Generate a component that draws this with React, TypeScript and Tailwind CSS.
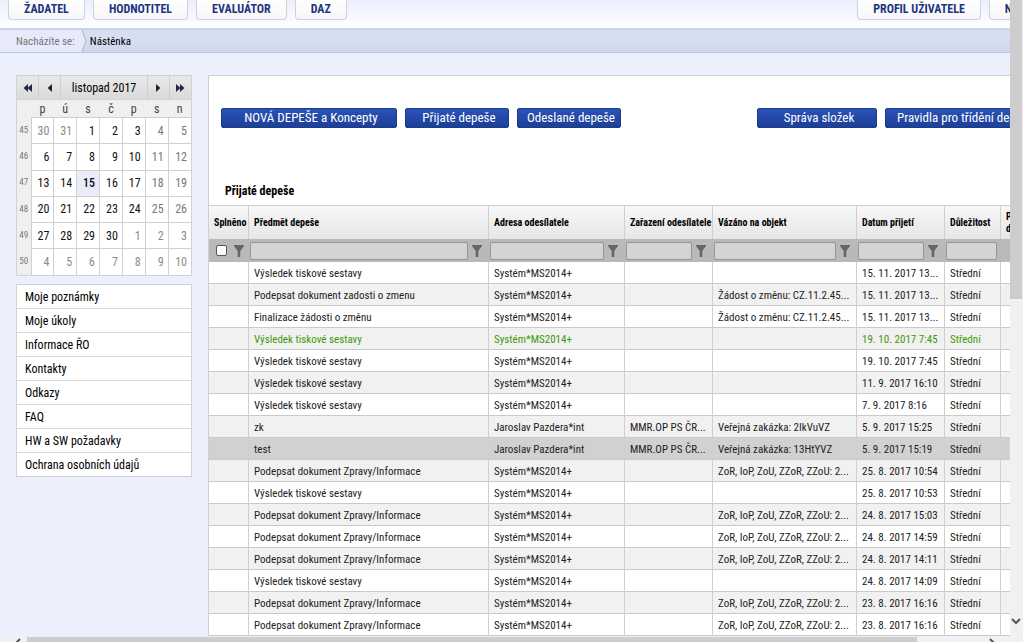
import React from 'react';

interface Message {
  subject: string;
  sender: string;
  group?: string;
  object?: string;
  received: string;
  state?: 'unread' | 'selected';
}

const SYSTEM = 'Systém*MS2014+';
const REPORT = 'Výsledek tiskové sestavy';
const SIGN = 'Podepsat dokument Zpravy/Informace';
const ZOR = 'ZoR, IoP, ZoU, ZZoR, ZZoU: 2...';
const CHANGE = 'Žádost o změnu: CZ.11.2.45...';
const GROUP = 'MMR.OP PS ČR...';

const messages: Message[] = [
  { subject: REPORT, sender: SYSTEM, received: '15. 11. 2017 13...' },
  { subject: 'Podepsat dokument zadosti o zmenu', sender: SYSTEM, object: CHANGE, received: '15. 11. 2017 13...' },
  { subject: 'Finalizace žádosti o změnu', sender: SYSTEM, object: CHANGE, received: '15. 11. 2017 13...' },
  { subject: REPORT, sender: SYSTEM, received: '19. 10. 2017 7:45', state: 'unread' },
  { subject: REPORT, sender: SYSTEM, received: '19. 10. 2017 7:45' },
  { subject: REPORT, sender: SYSTEM, received: '11. 9. 2017 16:10' },
  { subject: REPORT, sender: SYSTEM, received: '7. 9. 2017 8:16' },
  { subject: 'zk', sender: 'Jaroslav Pazdera*int', group: GROUP, object: 'Veřejná zakázka: 2IkVuVZ', received: '5. 9. 2017 15:25' },
  { subject: 'test', sender: 'Jaroslav Pazdera*int', group: GROUP, object: 'Veřejná zakázka: 13HtYVZ', received: '5. 9. 2017 15:19', state: 'selected' },
  { subject: SIGN, sender: SYSTEM, object: ZOR, received: '25. 8. 2017 10:54' },
  { subject: REPORT, sender: SYSTEM, received: '25. 8. 2017 10:53' },
  { subject: SIGN, sender: SYSTEM, object: ZOR, received: '24. 8. 2017 15:03' },
  { subject: SIGN, sender: SYSTEM, object: ZOR, received: '24. 8. 2017 14:59' },
  { subject: SIGN, sender: SYSTEM, object: ZOR, received: '24. 8. 2017 14:11' },
  { subject: REPORT, sender: SYSTEM, received: '24. 8. 2017 14:09' },
  { subject: SIGN, sender: SYSTEM, object: ZOR, received: '23. 8. 2017 16:16' },
  { subject: SIGN, sender: SYSTEM, object: ZOR, received: '23. 8. 2017 16:16' },
];

const columns = [
  { label: 'Předmět depeše', width: 'w-60', filter: true },
  { label: 'Adresa odesílatele', width: 'w-[136px]', filter: true },
  { label: 'Zařazení odesílatele', width: 'w-[88px]', filter: true },
  { label: 'Vázáno na objekt', width: 'w-36', filter: true },
  { label: 'Datum přijetí', width: 'w-[88px]', filter: true },
  { label: 'Důležitost', width: 'w-14', filter: false },
];

const weeks = [
  { week: 45, days: [30, 31, 1, 2, 3, 4, 5] },
  { week: 46, days: [6, 7, 8, 9, 10, 11, 12] },
  { week: 47, days: [13, 14, 15, 16, 17, 18, 19] },
  { week: 48, days: [20, 21, 22, 23, 24, 25, 26] },
  { week: 49, days: [27, 28, 29, 30, 1, 2, 3] },
  { week: 50, days: [4, 5, 6, 7, 8, 9, 10] },
];

const menu = [
  'Moje poznámky',
  'Moje úkoly',
  'Informace ŘO',
  'Kontakty',
  'Odkazy',
  'FAQ',
  'HW a SW požadavky',
  'Ochrana osobních údajů',
];

function NavTab({ label }: { label: string }) {
  return (
    <a
      href="#"
      className="flex h-5 items-center whitespace-nowrap rounded-b-sm border border-t-0 border-[#cfd2da] bg-gradient-to-b from-white to-[#f6f6f8] px-[15px] pb-px text-[12px] leading-4 font-bold text-[#1d3580]"
    >
      {label}
    </a>
  );
}

function ActionButton({ label, className }: { label: string; className: string }) {
  return (
    <button
      type="button"
      className={`h-5 shrink-0 whitespace-nowrap rounded-xs border border-[#1b3b8d] bg-gradient-to-b from-[#2a53b8] to-[#1d3f96] text-[13px] leading-4 text-white ${className}`}
    >
      {label}
    </button>
  );
}

function FilterIcon() {
  return (
    <svg className="h-3 w-[10px] shrink-0" viewBox="0 0 10 12" fill="#666" aria-hidden="true">
      <path d="M0 0h10v1L6.3 6v6H3.7V6L0 1z" />
    </svg>
  );
}

function Arrow({ double = false, flip = false }: { double?: boolean; flip?: boolean }) {
  return (
    <svg
      className={`h-2 ${double ? 'w-[9px]' : 'w-[5px]'} ${flip ? 'rotate-180' : ''}`}
      viewBox={double ? '0 0 9 8' : '0 0 5 8'}
      fill="#1e2a3c"
      aria-hidden="true"
    >
      <path d="M5 0v8L0.5 4z" />
      {double && <path d="M9 0v8L4.5 4z" />}
    </svg>
  );
}

function Calendar() {
  const isOutside = (row: number, day: number) => (row === 0 && day > 20) || (row > 3 && day < 20);
  const headButton = 'flex h-full w-[22px] items-center justify-center border-[#cfcfcf]';

  return (
    <div className="border border-[#d0d2d8] bg-[#efefef]">
      <div className="flex h-6 items-center border-b border-[#d4d4d4] bg-gradient-to-b from-[#e9e9e9] to-[#dadada]">
        <button type="button" aria-label="Předchozí rok" className={`${headButton} border-r`}><Arrow double /></button>
        <button type="button" aria-label="Předchozí měsíc" className={`${headButton} border-r`}><Arrow /></button>
        <span className="flex-1 text-center text-[12px] leading-5 text-black">listopad 2017</span>
        <button type="button" aria-label="Další měsíc" className={`${headButton} border-l`}><Arrow flip /></button>
        <button type="button" aria-label="Další rok" className={`${headButton} border-l`}><Arrow double flip /></button>
      </div>
      <table className="h-[175px] w-full table-fixed border-collapse">
        <thead>
          <tr className="h-4 text-[12px] leading-4 text-[#444]">
            <th className="w-[14px]" aria-label="Týden" />
            {['p', 'ú', 's', 'č', 'p', 's', 'n'].map((name, i) => (
              <th key={i} className="pt-px font-normal">{name}</th>
            ))}
          </tr>
        </thead>
        <tbody>
          {weeks.map(({ week, days }, row) => (
            <tr key={week} className="h-[26px]">
              <th className="text-center text-[9px] font-normal text-[#777]">{week}</th>
              {days.map((day, col) => (
                <td
                  key={col}
                  className={`border border-r-0 border-b-0 border-[#d0d0d0] pr-1 text-right text-[12px] leading-4 ${
                    week === 47 && day === 15 ? 'bg-[#e9ecfb] font-medium' : 'bg-white'
                  } ${isOutside(row, day) ? 'text-[#8a8a8a]' : col > 4 ? 'text-[#777]' : 'text-[#111]'}`}
                >
                  {day}
                </td>
              ))}
            </tr>
          ))}
        </tbody>
      </table>
    </div>
  );
}

function MessageTable() {
  const cell = 'truncate border-r border-[#cfcfcf] pt-0.5 pl-[5px]';

  return (
    <table className="w-full table-fixed border-separate border-spacing-0">
      <colgroup>
        <col className="w-10" />
        {columns.map((column) => (
          <col key={column.label} className={column.width} />
        ))}
        <col />
      </colgroup>
      <thead>
        <tr className="h-[34px] bg-gradient-to-b from-[#f8f8f8] to-[#e6e6e6] text-left text-[10px] leading-3 font-bold text-black">
          <th className="border-t border-r border-[#cfcfcf] pl-[5px]">Splněno</th>
          {columns.map((column) => (
            <th key={column.label} className="whitespace-nowrap border-t border-r border-[#cfcfcf] pl-[5px]">
              {column.label}
            </th>
          ))}
          <th className="border-t border-[#cfcfcf] pl-[5px]">Platnost<br />depeše</th>
        </tr>
        <tr className="h-[23px] bg-[#b9b9b9]">
          <td>
            <div className="flex items-center justify-between pr-[5px] pl-[7px]">
              <input
                type="checkbox"
                aria-label="Splněno"
                className="size-[11px] appearance-none rounded-xs border border-[#555] bg-white"
              />
              <FilterIcon />
            </div>
          </td>
          {columns.map((column) => (
            <td key={column.label}>
              <div className={`flex items-center gap-1 pl-px ${column.filter ? 'pr-[7px]' : 'pr-1'}`}>
                <input
                  type="text"
                  aria-label={column.label}
                  className="h-[18px] min-w-0 flex-1 rounded-xs border border-[#969696] bg-[#d4d4d4] px-1 text-[11px]"
                />
                {column.filter && <FilterIcon />}
              </div>
            </td>
          ))}
          <td />
        </tr>
      </thead>
      <tbody className="text-[11px] leading-4">
        {messages.map((message, i) => (
          <tr
            key={i}
            className={`h-[22px] *:border-b *:border-b-[#cacaca] ${
              message.state === 'selected' ? 'bg-[#d1d1d1]' : i % 2 ? 'bg-[#f1f1f1]' : 'bg-white'
            } ${message.state === 'unread' ? 'text-[#3c9a08]' : 'text-[#222]'}`}
          >
            <td className={cell} />
            <td className={cell}>{message.subject}</td>
            <td className={cell}>{message.sender}</td>
            <td className={cell}>{message.group}</td>
            <td className={cell}>{message.object}</td>
            <td className={cell}>{message.received}</td>
            <td className={cell}>Střední</td>
            <td />
          </tr>
        ))}
      </tbody>
    </table>
  );
}

export default function App() {
  return (
    <div className="flex h-screen flex-col overflow-hidden bg-[#ecf0fd] font-['Roboto_Condensed','Roboto',sans-serif] text-black">
      <div className="flex min-h-0 flex-1">
        <div className="min-w-0 flex-1 overflow-hidden">
          <div className="min-w-[1084px]">
            <header className="flex h-7 items-start gap-2 bg-gradient-to-b from-[#ebeffd] to-white px-2">
              <NavTab label="ŽADATEL" />
              <NavTab label="HODNOTITEL" />
              <NavTab label="EVALUÁTOR" />
              <NavTab label="DAZ" />
              <div className="ml-auto flex gap-2">
                <NavTab label="PROFIL UŽIVATELE" />
                <NavTab label="NÁPOVĚDA" />
              </div>
            </header>

            <nav className="flex h-[25px] items-stretch border-t-2 border-b border-t-[#ccd3e4] border-b-[#bcc5db] bg-gradient-to-b from-[#d6def2] via-[#d6def2] to-[#cdd6ea] text-[11px] leading-4">
              <span className="flex items-center bg-[#e6eafa] pt-px pr-[5px] pl-4 text-[#777]">Nacházíte se:</span>
              <svg className="h-full w-[7px]" viewBox="0 0 7 22" preserveAspectRatio="none" aria-hidden="true">
                <path d="M0 0h2l4 11-4 11H0z" fill="#e6eafa" />
                <path d="M2 0l4 11-4 11" fill="none" stroke="#aab3c9" />
              </svg>
              <a href="#" className="flex items-center pt-px pl-[3px]">Nástěnka</a>
            </nav>

            <div className="flex gap-4 pt-[22px] pl-4">
              <aside className="flex w-44 shrink-0 flex-col gap-2">
                <Calendar />
                <ul className="border border-[#d0d2d8] bg-white">
                  {menu.map((item) => (
                    <li key={item} className="border-b border-[#d8d8d8] last:border-b-0">
                      <a href="#" className="block h-[23px] pl-2 text-[12px] leading-6">{item}</a>
                    </li>
                  ))}
                </ul>
              </aside>

              <main className="min-w-0 flex-1 rounded-tl-xs border-t border-l border-[#cccfd9] bg-white">
                <div className="flex gap-2 pt-8 pl-3">
                  <ActionButton label="NOVÁ DEPEŠE a Koncepty" className="w-44 pl-1" />
                  <ActionButton label="Přijaté depeše" className="w-[104px] pl-1" />
                  <ActionButton label="Odeslané depeše" className="w-[104px] pl-1" />
                  <ActionButton label="Správa složek" className="ml-32 w-[120px] pl-1" />
                  <ActionButton label="Pravidla pro třídění depeší" className="px-[11px]" />
                </div>
                <h2 className="mt-[53px] mb-1 pl-4 text-[12px] leading-5 font-bold">Přijaté depeše</h2>
                <MessageTable />
              </main>
            </div>
          </div>
        </div>

        {/* vertical scroll bar */}
        <div className="flex w-[13px] shrink-0 flex-col justify-between bg-[#f1f1f1]">
          <div className="h-[47%] w-3 bg-[#cdcdcd]" />
          <svg className="mb-3 h-[7px] w-3" viewBox="0 0 12 7" fill="none" stroke="#555" strokeWidth="2" aria-hidden="true">
            <path d="M2 1l4 4 4-4" />
          </svg>
        </div>
      </div>

      {/* horizontal scroll bar */}
      <div className="flex h-[5px] shrink-0 bg-[#f1f1f1]">
        <svg className="ml-3 h-[5px] w-[15px]" viewBox="0 0 15 5" fill="none" stroke="#555" strokeWidth="2" aria-hidden="true">
          <path d="M8 2L3 7" />
        </svg>
        <div className="w-[87%] bg-[#cdcdcd]" />
        <svg className="mr-6 ml-auto h-[5px] w-[10px]" viewBox="0 0 10 5" fill="none" stroke="#555" strokeWidth="2" aria-hidden="true">
          <path d="M1 2l5 5" />
        </svg>
      </div>
    </div>
  );
}
